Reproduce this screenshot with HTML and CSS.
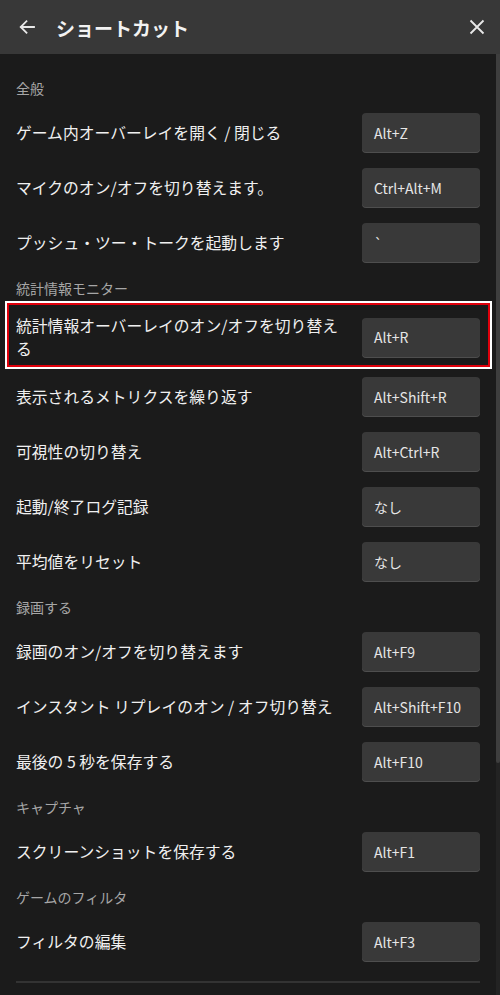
FILE: index.html
```html
<!DOCTYPE html>
<html lang="ja">

<head>
  <meta charset="UTF-8">
  <meta name="viewport" content="width=device-width, initial-scale=1.0">
  <title>ショートカット</title>
  <link rel="stylesheet" href="styles.css">
</head>

<body>
  <header class="topbar">
    <button class="icon-btn back" aria-label="戻る">
      <svg width="20" height="20" viewBox="0 0 20 20"><path d="M17 10H4M9.5 4.2L3.7 10l5.8 5.8" fill="none" stroke="#e8e8e8" stroke-width="1.8" stroke-linecap="square"/></svg>
    </button>
    <h1 class="title">ショートカット</h1>
    <button class="icon-btn close" aria-label="閉じる">
      <svg width="18" height="18" viewBox="0 0 18 18"><path d="M2.5 2.5l13 13M15.5 2.5l-13 13" fill="none" stroke="#e8e8e8" stroke-width="1.8"/></svg>
    </button>
  </header>

  <div class="panel">
    <main class="list">
      <div class="section">全般</div>
      <div class="row"><span class="label">ゲーム内オーバーレイを開く / 閉じる</span><span class="key">Alt+Z</span></div>
      <div class="row"><span class="label">マイクのオン/オフを切り替えます。</span><span class="key">Ctrl+Alt+M</span></div>
      <div class="row"><span class="label">プッシュ・ツー・トークを起動します</span><span class="key">`</span></div>

      <div class="section">統計情報モニター</div>
      <div class="row tall selected"><span class="label">統計情報オーバーレイのオン/オフを切り替える</span><span class="key">Alt+R</span></div>
      <div class="row"><span class="label">表示されるメトリクスを繰り返す</span><span class="key">Alt+Shift+R</span></div>
      <div class="row"><span class="label">可視性の切り替え</span><span class="key">Alt+Ctrl+R</span></div>
      <div class="row"><span class="label">起動/終了ログ記録</span><span class="key">なし</span></div>
      <div class="row"><span class="label">平均値をリセット</span><span class="key">なし</span></div>

      <div class="section">録画する</div>
      <div class="row"><span class="label">録画のオン/オフを切り替えます</span><span class="key">Alt+F9</span></div>
      <div class="row"><span class="label">インスタント リプレイのオン / オフ切り替え</span><span class="key">Alt+Shift+F10</span></div>
      <div class="row"><span class="label">最後の 5 秒を保存する</span><span class="key">Alt+F10</span></div>

      <div class="section">キャプチャ</div>
      <div class="row"><span class="label">スクリーンショットを保存する</span><span class="key">Alt+F1</span></div>

      <div class="section">ゲームのフィルタ</div>
      <div class="row"><span class="label">フィルタの編集</span><span class="key">Alt+F3</span></div>

      <hr class="divider">
    </main>
    <div class="scrollbar"><div class="thumb"></div></div>
  </div>
</body>
</html>
```

FILE: styles.css
```css
:root {
  --bg: #1b1b1b;
  --bar: #383838;
  --key-bg: #393939;
  --text: #ececec;
  --muted: #a6a6a6;
}
html {
  font-family: "Noto Sans CJK JP", "Noto Sans", sans-serif;
}
body {
  margin: 0;
  height: 995px;
  background: var(--bg);
  color: var(--text);
  display: flex;
  flex-direction: column;
  overflow: hidden;
}

/* barra superior */
.topbar {
  height: 54px;
  background: var(--bar);
  display: flex;
  align-items: center;
  padding: 0 12px 0 16px;
  flex-shrink: 0;
}
.icon-btn {
  background: none; border: none; padding: 0;
  display: flex; align-items: center; justify-content: center;
  cursor: pointer;
}
.back { width: 22px; height: 22px; }
.close { width: 22px; height: 22px; margin-left: auto; }
.title {
  margin: 0 0 0 18px;
  font-size: 19px; font-weight: 700;
  color: #f2f2f2;
}

/* lista */
.panel { flex: 1; display: flex; min-height: 0; }
.list {
  flex: 1;
  padding: 16px 16px 0 16px;
}
.scrollbar { width: 4px; background: #232323; }
.thumb { height: 709px; background: #3e3e3e; border-radius: 0 0 2px 2px; }

.section {
  height: 35px;
  display: flex; align-items: center;
  font-size: 14px;
  color: var(--muted);
}
.row {
  height: 55px;
  display: flex; align-items: center;
  position: relative;
}
.row.tall { height: 64px; }
.label {
  flex: 1;
  font-size: 15.8px; line-height: 23px;
  padding-right: 22px;
  color: #f0f0f0;
}
.key {
  width: 106px; height: 39px;
  padding-left: 12px;
  display: flex; align-items: center;
  background: var(--key-bg);
  border-radius: 4px;
  box-shadow: 0 1px 0 #4e4e4e;
  font-size: 14px;
  color: #e6e6e6;
  flex-shrink: 0;
}
.selected::after {
  content: "";
  position: absolute;
  top: -2px; bottom: 2px; left: -9px; right: -10px;
  border: 2px solid #e0000b;
  box-shadow: 0 0 0 2px #fff;
  pointer-events: none;
}
.divider {
  margin: 12px 0 0 0;
  border: none;
  border-top: 2px solid #333;
}
```
